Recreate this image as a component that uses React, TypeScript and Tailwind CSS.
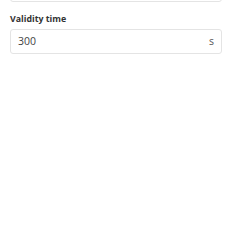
import React from "react";

export default function App() {
  return (
    <div className="w-[232px] h-[232px] bg-white overflow-hidden" style={{ fontFamily: '"Open Sans", sans-serif' }}>
      <div className="px-[10px]">
        <div className="-mt-[22px] h-[24px] rounded-[3px] border border-[#e4e4e4]" />
        <div className="mt-[10px] text-[8.8px] leading-[14px] font-bold text-[#333333]">Validity time</div>
        <div className="mt-[3px] h-[25px] rounded-[3px] border border-[#e4e4e4] flex items-center justify-between pl-[7px] pr-[7px]">
          <span className="text-[10.5px] text-[#444444]">300</span>
          <span className="text-[10.5px] text-[#555555]">s</span>
        </div>
      </div>
    </div>
  );
}
